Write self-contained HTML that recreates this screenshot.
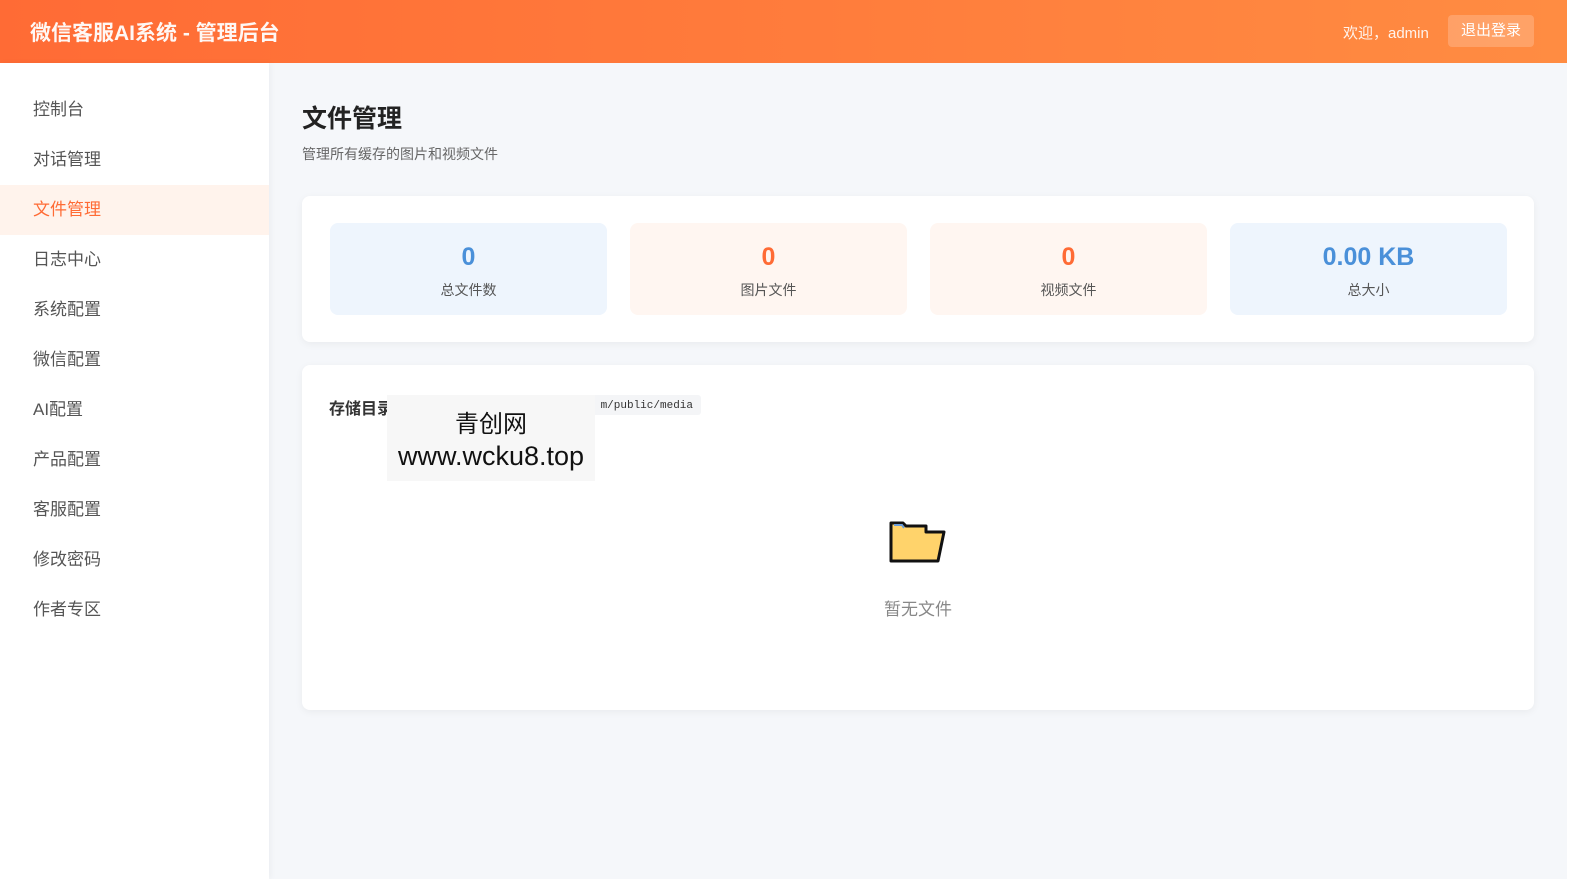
<!DOCTYPE html>
<html><head><meta charset="utf-8"><style>
*{margin:0;padding:0;box-sizing:border-box}
body{width:1585px;height:879px;overflow:hidden;font-family:"Liberation Sans","Noto Sans CJK SC",sans-serif;background:#fff;position:relative}
.wrap{position:absolute;left:0;top:0;width:1567px;height:879px;background:#f5f7fa}
.hdr{position:absolute;left:0;top:0;width:1567px;height:63px;background:linear-gradient(90deg,#ff6b35,#ff8c42);color:#fff}
.hdr .t{position:absolute;left:30px;top:17px;font-size:21px;font-weight:bold;opacity:.95}
.hdr .w{position:absolute;left:1343px;top:22px;font-size:15px;opacity:.9}
.hdr .b{position:absolute;left:1448px;top:15px;width:86px;height:32px;background:rgba(255,255,255,.2);border-radius:4px;font-size:15px;line-height:32px;text-align:center}
.side{position:absolute;left:0;top:63px;width:269px;height:816px;background:#fff;box-shadow:2px 0 6px rgba(0,0,0,.04)}
.side div{position:absolute;left:0;width:269px;height:50px;line-height:50px;padding-left:33px;font-size:17px;color:#555}
.side .a{background:#fff3ec;color:#ff6b35}
h1{position:absolute;left:302px;top:99px;font-size:25px;color:#222}
.sub{position:absolute;left:302px;top:144px;font-size:14px;color:#666}
.card{position:absolute;left:302px;width:1232px;background:#fff;border-radius:8px;box-shadow:0 2px 8px rgba(0,0,0,.05)}
.st{position:absolute;top:27px;width:277px;height:92px;border-radius:8px;text-align:center}
.st b{display:block;margin-top:20px;font-size:25px}
.st span{display:block;margin-top:8px;font-size:14px;color:#555}
.blue{background:#eef5fd}.blue b{color:#4a90d9}
.org{background:#fff6f1}.org b{color:#ff6b35}
</style></head><body><div class="wrap">
<div class="hdr"><div class="t">微信客服AI系统 - 管理后台</div><div class="w">欢迎，admin</div><div class="b">退出登录</div></div>
<div class="side">
<div style="top:22px">控制台</div><div style="top:72px">对话管理</div><div class="a" style="top:122px">文件管理</div><div style="top:172px">日志中心</div><div style="top:222px">系统配置</div><div style="top:272px">微信配置</div><div style="top:322px">AI配置</div><div style="top:372px">产品配置</div><div style="top:422px">客服配置</div><div style="top:472px">修改密码</div><div style="top:522px">作者专区</div>
</div>
<h1>文件管理</h1><div class="sub">管理所有缓存的图片和视频文件</div>
<div class="card" style="top:196px;height:146px">
<div class="st blue" style="left:28px"><b>0</b><span>总文件数</span></div>
<div class="st org" style="left:328px"><b>0</b><span>图片文件</span></div>
<div class="st org" style="left:628px"><b>0</b><span>视频文件</span></div>
<div class="st blue" style="left:928px"><b>0.00 KB</b><span>总大小</span></div>
</div>
<div class="card" style="top:365px;height:345px">
<div style="position:absolute;left:27px;top:30px;font-size:16px;font-weight:bold;color:#333">存储目录</div>
<div style="position:absolute;left:85px;top:30px;width:314px;height:20px;background:#f4f5f7;border-radius:3px;font-family:'Liberation Mono',monospace;font-size:11px;line-height:22px;text-align:right;padding-right:8px;color:#333">m/public/media</div>
<div style="position:absolute;left:85px;top:30px;width:208px;height:86px;background:#f7f7f7;text-align:center;color:#111"><div style="font-size:24px;margin-top:9px">青创网</div><div style="font-size:27px;margin-top:2px">www.wcku8.top</div></div>
<svg style="position:absolute;left:586px;top:154px" width="60" height="46" viewBox="0 0 60 46"><path d="M3 4 h12 l3 3 h20 v6 h18 l-6 29 h-47 z" fill="#ffd36b" stroke="#111" stroke-width="3" stroke-linejoin="round"/><path d="M6 6 h8 l2 3" stroke="#6a9bd8" stroke-width="2" fill="none"/></svg>
<div style="position:absolute;left:0;width:1232px;top:230px;text-align:center;font-size:17px;color:#888">暂无文件</div>
</div>
</div></body></html>
